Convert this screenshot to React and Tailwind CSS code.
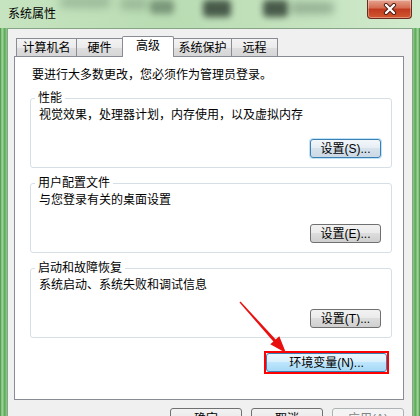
import React from "react";

const FONT = "font-['Liberation_Sans','Noto_Sans_CJK_SC',sans-serif]";

function Btn({ children, kind = "normal", className = "" }) {
  const styles = {
    normal:
      "border-[#707070] bg-[linear-gradient(#f2f2f2,#ebebeb_45%,#dddddd_50%,#cfcfcf)] text-black",
    focus:
      "border-[#3c7fb1] bg-[linear-gradient(#f3f7fa,#e6eef4_45%,#d6e2ec_50%,#cbd9e5)] text-black shadow-[0_0_0_1px_#bfe3f8]",
    hover:
      "border-[#3c7fb1] bg-[linear-gradient(#eaf6fd,#d9f0fc_45%,#bee6fd_50%,#a7d9f5)] text-black",
    disabled: "border-[#adb2b5] bg-[#f4f4f4] text-[#838383]",
  };
  return (
    <div
      className={`flex items-center justify-center rounded-[3px] border text-[12px] leading-[16px] ${styles[kind]} ${className}`}
    >
      {children}
    </div>
  );
}

function Tab({ label, w, selected, first }) {
  return (
    <div
      className={`flex items-start justify-center border border-b-0 border-[#898c95] text-[12px] leading-[16px] text-black ${
        first ? "" : "-ml-px"
      } ${
        selected
          ? "relative z-10 -mb-px h-[21px] bg-white pt-[1px] rounded-t-[2px]"
          : "h-[18px] bg-[linear-gradient(#f3f3f3,#ebebeb_50%,#dedede_51%,#d6d6d6)] pt-[1px]"
      } ${w}`}
    >
      {label}
    </div>
  );
}

function Group({ title, desc, btn, kind }) {
  return (
    <fieldset className="rounded-[3px] border border-[#d5dfe5] pl-[8px] pr-[10px] pb-[9px]">
      <legend className="-ml-[4px] px-[3px] text-[12px] leading-[16px] text-black">
        {title}
      </legend>
      <div className="mt-[1px] text-[12px] leading-[16px] text-black">{desc}</div>
      <div className="mt-[16px] flex justify-end">
        <Btn kind={kind} className="h-[19px] w-[71px]">
          {btn}
        </Btn>
      </div>
    </fieldset>
  );
}

export default function App() {
  return (
    <div
      className={`relative flex h-[416px] w-[420px] flex-col overflow-hidden bg-[#bfe0b9] ${FONT}`}
    >
      {/* title bar */}
      <div className="relative flex h-[28px] shrink-0 items-center overflow-hidden bg-[linear-gradient(to_right,#c6e4c0,#b9dcb3_40%,#c3e2bd_70%,#d2ebce)] pl-[8px]">
        <div className="absolute left-[60px] top-[-4px] h-[12px] w-[50px] rounded bg-[#4f6a55] opacity-30 blur-[4px]" />
        <div className="absolute left-[120px] top-[-2px] h-[12px] w-[28px] rounded bg-[#4f6a55] opacity-30 blur-[4px]" />
        <div className="absolute left-[150px] top-[0px] h-[14px] w-[24px] rounded bg-[#3e5644] opacity-50 blur-[3px]" />
        <div className="absolute left-[203px] top-[0px] h-[17px] w-[28px] rounded bg-[#2c3b30] opacity-80 blur-[3px]" />
        <div className="absolute left-[263px] top-[0px] h-[17px] w-[25px] rounded bg-[#2c3b30] opacity-80 blur-[3px]" />
        <div className="absolute left-[290px] top-[2px] h-[12px] w-[44px] rounded bg-[#506a56] opacity-40 blur-[4px]" />
        <span className="relative text-[12px] leading-[16px] text-black">系统属性</span>
        {/* close button */}
        <div className="absolute right-[8px] top-0 flex h-[19px] w-[45px] items-center justify-center rounded-b-[4px] border border-t-0 border-[#6b2a1e] bg-[linear-gradient(#e6a38f,#d46a4f_45%,#c0391f_50%,#d2572f)] shadow-[inset_0_0_0_1px_rgba(255,255,255,0.35)]">
          <svg width="14" height="12" viewBox="0 0 14 12">
            <path d="M3 2 L11 10 M11 2 L3 10" stroke="#4a1a12" strokeWidth="4.2" strokeLinecap="round" />
            <path d="M3 2 L11 10 M11 2 L3 10" stroke="#ffffff" strokeWidth="2.4" strokeLinecap="round" />
          </svg>
        </div>
      </div>

      {/* frame + body */}
      <div className="flex flex-1">
        <div className="w-[7px] bg-[linear-gradient(to_right,#3f8f3f,#a6d9a0_30%,#5eac5c_65%,#8ec98a)]" />
        <div className="flex-1 border-x border-t border-[#87a487] bg-[#f0f0f0] pl-[6px] pr-[8px] pt-[7px]">
          {/* tabs */}
          <div className="flex h-[20px] items-end pl-[2px]">
            <Tab label="计算机名" w="w-[61px]" first />
            <Tab label="硬件" w="w-[47px]" />
            <Tab label="高级" w="w-[52px]" selected />
            <Tab label="系统保护" w="w-[59px]" />
            <Tab label="远程" w="w-[47px]" />
          </div>
          {/* panel */}
          <div className="flex h-[344px] flex-col border border-[#898c95] bg-white pl-[15px] pr-[11px] pt-[10px]">
            <div className="pl-[2px] text-[12px] leading-[16px] text-black">
              要进行大多数更改，您必须作为管理员登录。
            </div>
            <div className="mt-[7px] flex flex-col gap-[7px]">
              <Group
                title="性能"
                desc="视觉效果，处理器计划，内存使用，以及虚拟内存"
                btn="设置(S)..."
                kind="focus"
              />
              <Group title="用户配置文件" desc="与您登录有关的桌面设置" btn="设置(E)..." kind="normal" />
              <Group title="启动和故障恢复" desc="系统启动、系统失败和调试信息" btn="设置(T)..." kind="normal" />
            </div>
            <div className="mt-[13px] flex justify-end pr-[3px]">
              <div className="border-2 border-[#ff0000]">
                <Btn kind="hover" className="h-[19px] w-[121px]">
                  环境变量(N)...
                </Btn>
              </div>
            </div>
          </div>
          {/* bottom buttons */}
          <div className="mt-[8px] flex justify-end gap-[9px]">
            <Btn className="h-[22px] w-[72px]">确定</Btn>
            <Btn className="h-[22px] w-[72px]">取消</Btn>
            <Btn kind="disabled" className="h-[22px] w-[72px]">应用(A)</Btn>
          </div>
        </div>
        <div className="w-[7px] bg-[linear-gradient(to_right,#8ec98a,#5eac5c_35%,#a6d9a0_70%,#3f8f3f)]" />
      </div>

      {/* red annotation arrow */}
      <svg className="pointer-events-none absolute left-0 top-0" width="420" height="416" viewBox="0 0 420 416">
        <polygon points="240.5,301.5 276.2,339.9 273.8,342.1 239.5,302.5" fill="#e8100f" />
        <polygon points="286,353 279.3,336.3 270.3,344.2" fill="#e8100f" />
      </svg>
    </div>
  );
}
